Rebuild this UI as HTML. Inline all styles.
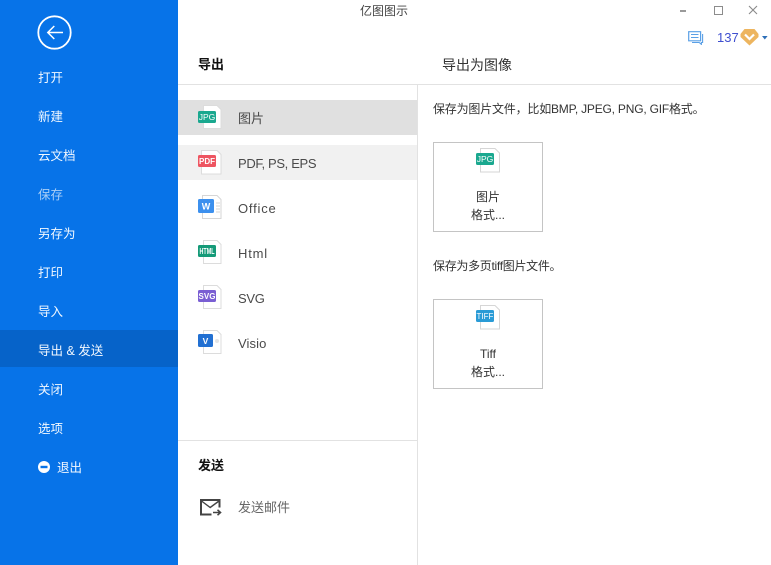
<!DOCTYPE html>
<html lang="zh">
<head>
<meta charset="utf-8">
<style>
html,body{margin:0;padding:0;background:#fff}
body{position:relative;width:771px;height:565px;overflow:hidden;font-family:"Liberation Sans","Noto Sans CJK SC",sans-serif;color:#333}
.a{position:absolute;white-space:nowrap}
.side{left:0;top:0;width:178px;height:565px;background:#0773e8}
.nav{left:38px;font-size:12.5px;line-height:18px;color:#f2f8ff}
.li{left:238px;font-size:13px;line-height:18px;color:#4a4a4a}
.ic{position:absolute}
.ic text{font-family:"Liberation Sans",sans-serif;font-size:8.5px;fill:#fff}
.btn{left:433px;width:108px;border:1px solid #c4c4c4;background:#fff}
.cap{left:433px;width:110px;text-align:center;font-size:12px;line-height:18px;color:#333}
</style>
</head>
<body>
<div class="a side"></div>
<div class="a" style="left:0;top:330px;width:178px;height:37px;background:#0663c9"></div>

<svg class="ic" style="left:37px;top:15px" width="36" height="36" viewBox="0 0 36 36">
<circle cx="17.5" cy="17.5" r="16.2" fill="none" stroke="#fff" stroke-width="1.8"/>
<path d="M26 17.5H11M17.3 11L10.8 17.5l6.5 6.5" fill="none" stroke="#fff" stroke-width="1.5"/>
</svg>

<div class="a nav" style="top:69px">打开</div>
<div class="a nav" style="top:108px">新建</div>
<div class="a nav" style="top:147px">云文档</div>
<div class="a nav" style="top:186px;color:#a9cef6">保存</div>
<div class="a nav" style="top:225px">另存为</div>
<div class="a nav" style="top:264px">打印</div>
<div class="a nav" style="top:303px">导入</div>
<div class="a nav" style="top:342px">导出 &amp; 发送</div>
<div class="a nav" style="top:381px">关闭</div>
<div class="a nav" style="top:420px">选项</div>
<svg class="ic" style="left:38px;top:461px" width="12" height="12" viewBox="0 0 12 12"><circle cx="6" cy="6" r="6" fill="#fff"/><rect x="2.5" y="4.8" width="7" height="2.4" fill="#0773e8"/></svg>
<div class="a nav" style="left:57px;top:459px">退出</div>

<div class="a" style="left:360px;top:3px;font-size:12px;line-height:17px;color:#444">亿图图示</div>

<div class="a" style="left:680px;top:10px;width:6px;height:2px;background:#9a9a9a"></div>
<div class="a" style="left:714px;top:6px;width:7px;height:7px;border:1px solid #8c8c8c"></div>
<svg class="ic" style="left:748px;top:5px" width="10" height="10" viewBox="0 0 10 10"><path d="M1 1l8 8M9 1L1 9" stroke="#8a8a8a" stroke-width="1.1" fill="none"/></svg>

<svg class="ic" style="left:688px;top:31px" width="16" height="14" viewBox="0 0 16 14">
<path d="M.7.7H12.6V9.8H.7Z" fill="none" stroke="#5aa0e6" stroke-width="1.2"/>
<path d="M3 3.5H10.5M3 6.5H10.5" stroke="#5aa0e6" stroke-width="1"/>
<path d="M14.6 3V11.5H13.4V13.4L11.2 11.5H4" fill="none" stroke="#5aa0e6" stroke-width="1.1"/>
</svg>
<div class="a" style="left:717px;top:29px;font-size:13px;line-height:17px;color:#3f4fd0">137</div>
<svg class="ic" style="left:740px;top:28px" width="19" height="18" viewBox="0 0 19 18">
<path d="M4.5 1H14.5L18.5 6V9L9.5 17.5L.5 9V6Z" fill="#edb55f"/>
<path d="M5 6.5L9.5 11L14 6.5" fill="none" stroke="#fff" stroke-width="2.2"/>
</svg>
<svg class="ic" style="left:762px;top:36px" width="6" height="4" viewBox="0 0 6 4"><path d="M0 0H5.6L2.8 3.5Z" fill="#2d6fb8"/></svg>

<div class="a" style="left:178px;top:84px;width:593px;height:1px;background:#e2e2e2"></div>
<div class="a" style="left:417px;top:85px;width:1px;height:480px;background:#e2e2e2"></div>
<div class="a" style="left:178px;top:440px;width:239px;height:1px;background:#e2e2e2"></div>

<div class="a" style="left:198px;top:56px;font-size:13px;line-height:18px;font-weight:bold;color:#111">导出</div>
<div class="a" style="left:442px;top:56px;font-size:14px;line-height:18px;color:#333">导出为图像</div>

<div class="a" style="left:178px;top:100px;width:239px;height:35px;background:#e0e0e0"></div>
<div class="a" style="left:178px;top:145px;width:239px;height:35px;background:#f1f1f1"></div>

<!-- JPG -->
<svg class="ic" style="left:198px;top:104px" width="26" height="26" viewBox="0 0 26 26">
<path d="M5.5 1.5H19L23 5.5V24.5H5.5Z" fill="#fff" stroke="#dcdcdc"/>
<rect x="0" y="7" width="18" height="12" rx="1.5" fill="#1aa88f"/>
<text x="9" y="16" text-anchor="middle">JPG</text>
</svg>
<div class="a li" style="top:110px">图片</div>

<!-- PDF -->
<svg class="ic" style="left:198px;top:149px" width="26" height="26" viewBox="0 0 26 26">
<path d="M3.5 1.5H19L23 5.5V25H3.5Z" fill="#fff" stroke="#dcdcdc"/>
<rect x="0" y="6" width="18" height="12" rx="1.5" fill="#ee5561"/>
<text x="9" y="15" text-anchor="middle" style="font-size:8px;font-weight:bold">PDF</text>
</svg>
<div class="a li" style="top:155px;letter-spacing:-.35px">PDF, PS, EPS</div>

<!-- Office -->
<svg class="ic" style="left:198px;top:194px" width="26" height="26" viewBox="0 0 26 26">
<path d="M4.5 1.5H19L23 5.5V24.5H4.5Z" fill="#fff" stroke="#d6d6d6"/>
<path d="M18 9H22M18 12H22M18 15H22M18 18H22" stroke="#d6d6d6"/>
<rect x="0" y="5" width="16" height="14" rx="1.5" fill="#3c90ee"/>
<text x="8" y="15.6" text-anchor="middle" style="font-size:9px;font-weight:bold">W</text>
</svg>
<div class="a li" style="top:200px;letter-spacing:.8px">Office</div>

<!-- Html -->
<svg class="ic" style="left:198px;top:239px" width="26" height="26" viewBox="0 0 26 26">
<path d="M5.5 1.5H19L23 5.5V24.5H5.5Z" fill="#fff" stroke="#dcdcdc"/>
<rect x="0" y="6" width="18" height="12" rx="1.5" fill="#159a78"/>
<text x="9" y="15" text-anchor="middle" textLength="15" lengthAdjust="spacingAndGlyphs" style="font-size:8.5px;font-weight:bold">HTML</text>
</svg>
<div class="a li" style="top:245px;letter-spacing:.8px">Html</div>

<!-- SVG -->
<svg class="ic" style="left:198px;top:284px" width="26" height="26" viewBox="0 0 26 26">
<path d="M5.5 1.5H19L23 5.5V24.5H5.5Z" fill="#fff" stroke="#dcdcdc"/>
<rect x="0" y="6" width="18" height="12" rx="1.5" fill="#7a5fd3"/>
<text x="9" y="15" text-anchor="middle" style="font-size:8px;font-weight:bold">SVG</text>
</svg>
<div class="a li" style="top:290px;letter-spacing:-.3px">SVG</div>

<!-- Visio -->
<svg class="ic" style="left:198px;top:329px" width="26" height="26" viewBox="0 0 26 26">
<path d="M5.5 1.5H19L23 5.5V24.5H5.5Z" fill="#fff" stroke="#dcdcdc"/>
<circle cx="19" cy="12" r="2" fill="#e4e4e4"/>
<rect x="0" y="5" width="15" height="13" rx="1.5" fill="#2270d2"/>
<text x="7.5" y="15" text-anchor="middle" style="font-size:8.5px;font-weight:bold">V</text>
</svg>
<div class="a li" style="top:335px;letter-spacing:.1px">Visio</div>

<div class="a" style="left:198px;top:457px;font-size:13px;line-height:18px;font-weight:bold;color:#111">发送</div>
<svg class="ic" style="left:200px;top:499px" width="22" height="18" viewBox="0 0 22 18">
<path d="M19.5 8.5V1H1V15.5H11.5" fill="none" stroke="#444" stroke-width="2"/>
<path d="M1.5 2L10.2 8.5L19 2" fill="none" stroke="#444" stroke-width="1.4"/>
<path d="M13 13.5H20M17.5 10.8L20.5 13.5L17.5 16.2" fill="none" stroke="#444" stroke-width="1.6"/>
</svg>
<div class="a li" style="top:499px;color:#666">发送邮件</div>

<div class="a" style="left:433px;top:101px;font-size:12px;line-height:17px;color:#333;letter-spacing:-.2px">保存为图片文件，比如BMP, JPEG, PNG, GIF格式。</div>
<div class="a btn" style="top:142px;height:88px"></div>
<svg class="ic" style="left:476px;top:147px" width="25" height="26" viewBox="0 0 25 26">
<path d="M4.5 1.5H19L23.5 6V25H4.5Z" fill="#fff" stroke="#d6d6d6"/>
<rect x="0" y="6" width="18" height="12" rx="1.5" fill="#1aa88f"/>
<text x="9" y="15" text-anchor="middle">JPG</text>
</svg>
<div class="a cap" style="top:188px">图片</div>
<div class="a cap" style="top:206px">格式...</div>

<div class="a" style="left:433px;top:258px;font-size:12px;line-height:17px;color:#333;letter-spacing:-.3px">保存为多页tiff图片文件。</div>
<div class="a btn" style="top:299px;height:88px"></div>
<svg class="ic" style="left:476px;top:304px" width="25" height="26" viewBox="0 0 25 26">
<path d="M4.5 1.5H19L23.5 6V25H4.5Z" fill="#fff" stroke="#d6d6d6"/>
<rect x="0" y="6" width="18" height="12" rx="1.5" fill="#2a9bd6"/>
<text x="9" y="15" text-anchor="middle" style="font-size:8px">TIFF</text>
</svg>
<div class="a cap" style="top:345px">Tiff</div>
<div class="a cap" style="top:363px">格式...</div>
</body>
</html>
